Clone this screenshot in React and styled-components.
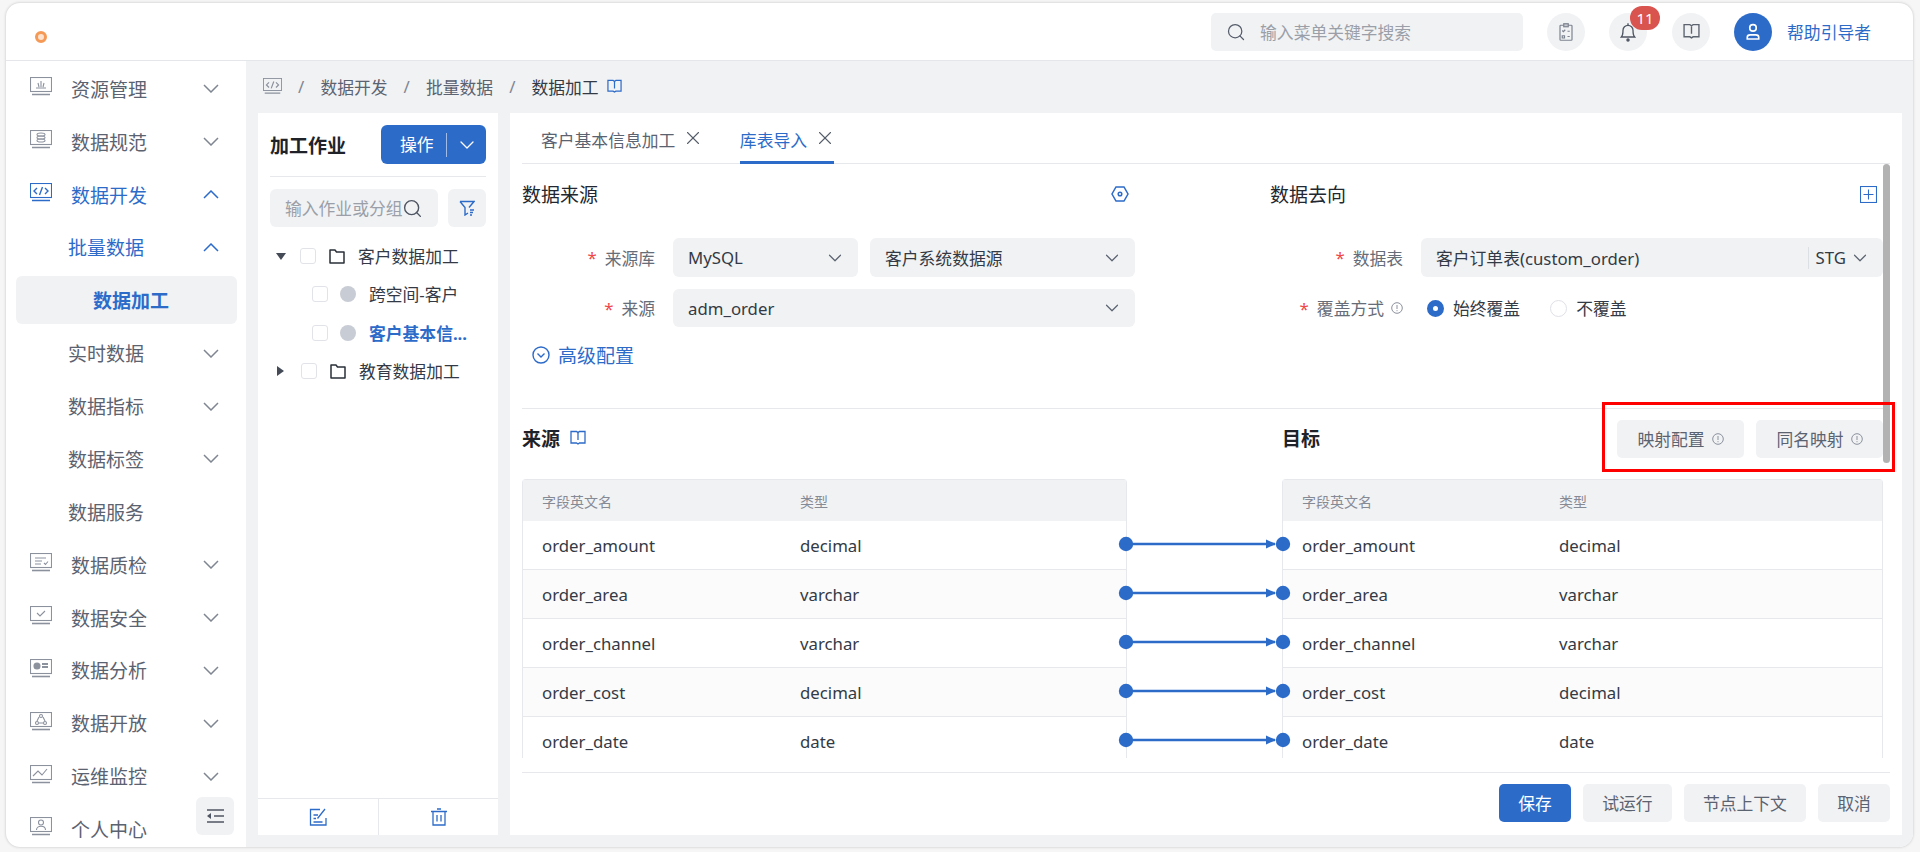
import React from 'react';
import styled, { createGlobalStyle } from 'styled-components';
import { Search, X, ChevronDown } from 'lucide-react';

const BLUE = '#2d6bc9';

const Global = createGlobalStyle`
  html, body { margin: 0; padding: 0; background: #f6f6f6; }
  body { font-family: "Noto Sans", "Noto Sans CJK SC", "Liberation Sans", sans-serif; }
  * { box-sizing: border-box; }
`;

const Page = styled.div`
  width: 1920px;
  height: 852px;
  padding: 3px 7px 5px 6px;
  overflow: hidden;
`;

const Frame = styled.div`
  height: 844px;
  background: #fff;
  border-radius: 14px;
  box-shadow: 0 0 3px rgba(0, 0, 0, 0.22);
  overflow: hidden;
  display: flex;
  flex-direction: column;
`;

/* top bar */
const Header = styled.header`
  height: 58px;
  flex: none;
  border-bottom: 1px solid #e4e6ea;
  display: flex;
  align-items: center;
  padding: 0 42px 0 29px;
`;

const Logo = styled.div`
  width: 12px;
  height: 12px;
  margin-top: 10px;
  border-radius: 50%;
  border: 3px solid #f59a56;
  background: #fde3cf;
`;

const HeaderRight = styled.div`
  margin-left: auto;
  display: flex;
  align-items: center;
`;

const TopSearch = styled.div`
  width: 312px;
  height: 38px;
  background: #f1f2f4;
  border-radius: 5px;
  display: flex;
  align-items: center;
  gap: 14px;
  padding-left: 15px;
  margin-right: 24px;
  color: #9a9fa8;
  font-size: 16.8px;
  svg { color: #565d6a; }
`;

const RoundIcon = styled.div`
  position: relative;
  width: 38px;
  height: 38px;
  border-radius: 50%;
  background: ${(p) => (p.$primary ? BLUE : '#f1f2f4')};
  color: ${(p) => (p.$primary ? '#fff' : '#5d6470')};
  margin-right: ${(p) => p.$gap || 24}px;
  display: flex;
  align-items: center;
  justify-content: center;
`;

const Badge = styled.span`
  position: absolute;
  top: -7px;
  right: -13px;
  width: 30px;
  height: 24px;
  border-radius: 12px;
  background: #d9534f;
  color: #fff;
  font-size: 15px;
  line-height: 24px;
  text-align: center;
`;

const HelpLink = styled.span`
  color: ${BLUE};
  font-size: 16.8px;
`;

const Body = styled.div`
  flex: 1;
  min-height: 0;
  display: flex;
`;

/* left menu */
const Sidebar = styled.nav`
  position: relative;
  width: 240px;
  flex: none;
  overflow: hidden;
  padding-top: 1.5px;
`;

const MenuRow = styled.div`
  height: 52.85px;
  display: flex;
  align-items: center;
  padding: 0 27px 0 ${(p) => (p.$sub ? 62 : 24)}px;
  font-size: 19px;
  color: ${(p) => (p.$on ? BLUE : '#5b6270')};
`;

const MenuIcon = styled.span`
  width: 41px;
  flex: none;
  display: flex;
  margin-top: -4px;
`;

const MenuChevron = styled.svg`
  margin-left: auto;
  width: 16px;
  height: 9px;
  fill: none;
  stroke: ${(p) => (p.$on ? BLUE : '#7f8692')};
  stroke-width: 1.5;
`;

const ActiveRow = styled.div`
  height: 48px;
  margin: 2.5px 9px 2.5px 10px;
  padding-left: 77px;
  display: flex;
  align-items: center;
  background: #f1f2f4;
  border-radius: 6px;
  font-size: 19px;
  font-weight: 700;
  color: ${BLUE};
`;

const CollapseButton = styled.button`
  position: absolute;
  left: 190px;
  bottom: 12px;
  width: 38px;
  height: 38px;
  border: 0;
  border-radius: 6px;
  background: #f1f2f4;
  color: #4f5663;
  display: flex;
  align-items: center;
  justify-content: center;
  padding: 0;
`;

/* work area */
const Work = styled.main`
  flex: 1;
  min-width: 0;
  background: #f1f2f4;
  padding: 0 11px 12px 12px;
  display: flex;
  flex-direction: column;
`;

const Crumbs = styled.div`
  height: 52px;
  flex: none;
  display: flex;
  align-items: center;
  padding-left: 5px;
  padding-bottom: 1px;
  font-size: 16.8px;
  color: #5b6270;
`;

const CrumbSep = styled.span`
  width: 38.4px;
  text-align: center;
  color: #7f8692;
`;

const CrumbNow = styled.span`
  color: #333a45;
  margin-right: 8px;
`;

const Panels = styled.div`
  flex: 1;
  min-height: 0;
  display: flex;
  gap: 12px;
`;

const JobPanel = styled.section`
  width: 240px;
  flex: none;
  background: #fff;
  display: flex;
  flex-direction: column;
`;

const JobHead = styled.div`
  margin: 12px 12px 0;
  padding-bottom: 12px;
  border-bottom: 1px solid #e6e8eb;
  display: flex;
  align-items: center;
  justify-content: space-between;
`;

const StrongTitle = styled.h3`
  margin: 0;
  font-size: 19px;
  font-weight: 700;
  color: #1f2329;
`;

const SplitButton = styled.button`
  width: 105px;
  height: 39px;
  border: 0;
  border-radius: 6px;
  background: ${BLUE};
  color: #fff;
  font: inherit;
  font-size: 16.8px;
  display: flex;
  align-items: center;
  padding: 0 0 0 19px;
  span { padding-right: 12px; line-height: 24px; border-right: 1px solid rgba(255,255,255,.55); }
  svg { margin-left: 8px; }
`;

const JobTools = styled.div`
  display: flex;
  gap: 10px;
  padding: 12px 12px 10px;
`;

const JobSearch = styled.div`
  width: 168px;
  height: 38px;
  border-radius: 6px;
  background: #f1f2f4;
  color: #9a9fa8;
  font-size: 16.8px;
  white-space: nowrap;
  display: flex;
  align-items: center;
  padding-left: 15px;
  svg { color: #4f5663; flex: none; }
`;

const FilterButton = styled.div`
  width: 38px;
  height: 38px;
  border-radius: 6px;
  background: #f1f2f4;
  color: ${BLUE};
  display: flex;
  align-items: center;
  justify-content: center;
`;

const Tree = styled.div`
  flex: 1;
`;

const TreeRow = styled.div`
  height: 38.3px;
  display: flex;
  align-items: center;
  padding-left: ${(p) => (p.$child ? 54 : 18)}px;
  font-size: 16.8px;
  color: ${(p) => (p.$on ? BLUE : '#333a45')};
  font-weight: ${(p) => (p.$on ? 700 : 400)};
`;

const Caret = styled.span`
  width: 0;
  height: 0;
  margin-right: ${(p) => (p.$open ? 14 : 17)}px;
  ${(p) => p.$open
    ? 'border-left: 5px solid transparent; border-right: 5px solid transparent; border-top: 7px solid #444b57; margin-left: 0;'
    : 'border-top: 5px solid transparent; border-bottom: 5px solid transparent; border-left: 7px solid #444b57; margin-left: 1px;'}
`;

const Check = styled.span`
  width: 16px;
  height: 16px;
  flex: none;
  border: 1.5px solid #e1e3e8;
  border-radius: 3px;
  background: #fff;
  margin-right: ${(p) => (p.$child ? 12 : 13)}px;
`;

const NodeDot = styled.span`
  width: 16px;
  height: 16px;
  flex: none;
  border-radius: 50%;
  background: #c8ccd4;
  margin-right: 13px;
`;

const FolderWrap = styled.span`
  display: flex;
  margin-right: 13px;
  color: #2a2f38;
`;

const JobFoot = styled.div`
  height: 37px;
  flex: none;
  border-top: 1px solid #e6e8eb;
  display: grid;
  grid-template-columns: 121px 1fr;
  color: ${BLUE};
`;

const FootCell = styled.div`
  display: flex;
  align-items: center;
  justify-content: center;
  border-right: ${(p) => (p.$line ? '1px solid #e6e8eb' : '0')};
`;

const EditorPanel = styled.section`
  flex: 1;
  min-width: 0;
  background: #fff;
  padding: 0 12px;
  display: flex;
  flex-direction: column;
`;

const Tabs = styled.div`
  height: 51px;
  flex: none;
  display: flex;
  gap: 37.6px;
  padding-left: 19px;
  border-bottom: 1px solid #e6e8eb;
`;

const Tab = styled.div`
  height: 51px;
  padding: 5px 3px 0 0;
  display: flex;
  align-items: center;
  gap: 12px;
  font-size: 16.8px;
  color: ${(p) => (p.$on ? BLUE : '#5b6270')};
  border-bottom: 3px solid ${(p) => (p.$on ? BLUE : 'transparent')};
  svg { color: #565d6a; margin: -3px -5px 0; }
`;

const ScrollArea = styled.div`
  position: relative;
  height: 594px;
  flex: none;
  padding-right: 7px;
`;

const ScrollThumb = styled.div`
  position: absolute;
  top: 0;
  right: 0;
  width: 7px;
  height: 299px;
  border-radius: 4px;
  background: #b2b2b2;
`;

const ConfigGrid = styled.div`
  height: 245px;
  border-bottom: 1px solid #e6e8eb;
  margin-right: -7px;
  padding-right: 7px;
  display: grid;
  grid-template-columns: 613px 613px;
  column-gap: 135px;
`;

const ConfigHead = styled.div`
  height: 34px;
  margin: 13px 0 27px;
  padding-right: 6px;
  display: flex;
  align-items: center;
  justify-content: space-between;
  color: ${BLUE};
`;

const PlainTitle = styled.h3`
  margin: 0;
  font-size: 19px;
  font-weight: 400;
  color: #222730;
`;

const FormRow = styled.div`
  display: grid;
  grid-template-columns: 133px 1fr;
  column-gap: 18px;
  align-items: center;
  margin-bottom: 12px;
  min-height: 38px;
`;

const FormLabel = styled.label`
  display: flex;
  justify-content: flex-end;
  align-items: center;
  font-size: 16.8px;
  color: #666c78;
  white-space: nowrap;
  i { color: #f0484a; font-style: normal; margin-right: 8px; }
  svg { margin-left: 7px; }
`;

const FieldGroup = styled.div`
  display: flex;
  gap: 12px;
`;

const SelectBox = styled.div`
  flex: ${(p) => (p.$w ? `0 0 ${p.$w}px` : 1)};
  height: ${(p) => p.$h || 38}px;
  border-radius: 6px;
  background: #f1f2f4;
  padding: 0 15px;
  font-size: 16.8px;
  color: #333a45;
  display: flex;
  align-items: center;
  justify-content: space-between;
  svg { color: #5b6270; margin-right: -3px; }
`;

const SchemaPick = styled.span`
  display: flex;
  align-items: center;
  gap: 3px;
  padding-left: 7px;
  line-height: 22px;
  border-left: 1px solid #dcdfe4;
`;

const RadioGroup = styled.div`
  display: flex;
  align-items: center;
  padding-left: 6px;
  font-size: 16.8px;
  color: #333a45;
`;

const Radio = styled.span`
  width: 17px;
  height: 17px;
  border-radius: 50%;
  margin-right: 9px;
  background: #fff;
  border: ${(p) => (p.$on ? `6px solid ${BLUE}` : '1.5px solid #dfe1e6')};
`;

const RadioText = styled.span`
  margin-right: 30px;
`;

const AdvancedLink = styled.div`
  display: flex;
  align-items: center;
  gap: 8px;
  padding-left: 10px;
  margin-top: 14px;
  font-size: 19px;
  color: ${BLUE};
`;

const MapGrid = styled.div`
  display: grid;
  grid-template-columns: 605px 155px 601px;
`;

const MapHead = styled.div`
  grid-column: ${(p) => p.$col};
  height: 70px;
  display: flex;
  align-items: center;
  padding-bottom: 10px;
  justify-content: ${(p) => (p.$spread ? 'space-between' : 'flex-start')};
  color: ${BLUE};
`;

const MapLabel = styled.div`
  display: flex;
  align-items: center;
  gap: 10px;
  margin-bottom: 2px;
`;

const ButtonPair = styled.div`
  position: relative;
  display: flex;
  gap: 12px;
`;

const Highlight = styled.div`
  position: absolute;
  inset: -18px -12px -14px -15px;
  border: 3px solid #f00;
  pointer-events: none;
`;

const HintButton = styled.div`
  width: 127px;
  height: 38px;
  border-radius: 5px;
  background: #f1f2f4;
  color: #5b6270;
  font-size: 16.8px;
  display: flex;
  align-items: center;
  justify-content: center;
  gap: 7px;
`;

const TableClip = styled.div`
  grid-column: 1 / -1;
  height: 279px;
  overflow: hidden;
  display: grid;
  grid-template-columns: 605px 155px 601px;
`;

const FieldTable = styled.div`
  border: 1px solid #e6e8eb;
  border-bottom: 0;
  border-radius: 4px 4px 0 0;
`;

const FieldHead = styled.div`
  height: 41px;
  background: #f1f2f4;
  display: grid;
  grid-template-columns: ${(p) => p.$col}px 1fr;
  align-items: center;
  padding-left: 19px;
  font-size: 14px;
  color: #858a94;
`;

const FieldRow = styled.div`
  height: 49px;
  display: grid;
  grid-template-columns: ${(p) => p.$col}px 1fr;
  align-items: center;
  padding-left: 19px;
  font-size: 16.8px;
  color: #333a45;
  background: ${(p) => (p.$even ? '#fbfbfb' : '#fff')};
  border-bottom: 1px solid #e6e8eb;
`;

const Links = styled.div`
  position: relative;
  z-index: 1;
  padding-top: 41px;
`;

const LinkSvg = styled.svg`
  display: block;
  overflow: visible;
  width: 155px;
  height: 49px;
`;

const Footer = styled.footer`
  flex: none;
  margin-top: 14px;
  padding-top: 11px;
  border-top: 1px solid #e6e8eb;
  display: flex;
  justify-content: flex-end;
  gap: 12px;
`;

const ActionButton = styled.button`
  height: 38px;
  padding: 0 19.2px;
  border: 0;
  border-radius: 5px;
  font: inherit;
  font-size: 16.8px;
  background: ${(p) => (p.$primary ? BLUE : '#f1f2f4')};
  color: ${(p) => (p.$primary ? '#fff' : '#5b6270')};
`;

/* drawings */
const MonitorIcon = ({ on, width = 22, children }) => {
  const c = on ? BLUE : '#8b919d';
  return (
    <svg width={width} height={(width * 19) / 22} viewBox="0 0 22 19" fill="none" stroke={c} strokeWidth="1.1">
      <rect x="0.5" y="0.5" width="21" height="14" />
      <path d="M2 17.5h18" strokeWidth="1.6" />
      {children}
    </svg>
  );
};

const glyphs = {
  resource: <path d="M6 11h10M11 4v6M8 6l1 4M14 6l-1 4" />,
  spec: <g><ellipse cx="11" cy="4.5" rx="4" ry="1.5" /><ellipse cx="11" cy="7.5" rx="4" ry="1.5" /><ellipse cx="11" cy="10.5" rx="4" ry="1.5" /></g>,
  dev: <path d="M7 5l-3 3 3 3M15 5l3 3-3 3M12.5 4l-3 8" strokeWidth="1.4" />,
  quality: <path d="M5 5h11M5 8h7M5 11h6M14 10l1.5 1.5 2.5-3" />,
  safe: <path d="M7 7l3 3 5-5" />,
  analysis: <g><circle cx="7" cy="7" r="3" fill="#8b919d" /><path d="M12 5h6M12 8h6" strokeWidth="2" /></g>,
  open: <g><circle cx="11" cy="4" r="1.5" /><circle cx="7" cy="11" r="1.5" /><circle cx="15" cy="11" r="1.5" /><path d="M9 5l-2 4M13 5l2 4M9 11h4" /></g>,
  ops: <path d="M3 11l5-5 4 4 5-6" />,
  user: <g><circle cx="11" cy="5.5" r="2.5" /><path d="M6.5 13c0-5 9-5 9 0" /></g>,
};

const Chev = ({ on }) => (
  <MenuChevron $on={on} viewBox="0 0 16 9">
    <path d={on ? 'M1 8l7-7 7 7' : 'M1 1l7 7 7-7'} />
  </MenuChevron>
);

const BookIcon = ({ size = 16, color = 'currentColor' }) => (
  <svg width={size} height={size} viewBox="0 0 16 16" fill="none" stroke={color} strokeWidth="1.3">
    <path d="M1 1.5h5.5L8 2.6l1.5-1.1H15v11.500H9.500L8 14l-1.500-1H1z" />
    <path d="M8 3v7" />
  </svg>
);

const InfoIcon = () => (
  <svg width="12" height="12" viewBox="0 0 12 12" fill="none" stroke="#8b919d" strokeWidth="1">
    <circle cx="6" cy="6" r="5.3" />
    <path d="M6 3v4M6 8.2v1" />
  </svg>
);

const ClipboardIcon = () => (
  <svg width="16" height="18" viewBox="0 0 18 24" fill="none" stroke="#7d838f" strokeWidth="1.6">
    <rect x="1" y="3" width="16" height="20" rx="1" />
    <rect x="6" y="1" width="6" height="4" fill="#c6c9cf" />
    <path d="M4 10l1.500 1.500L8 9M11 11h3M4 17h3v3H4zM11 18h3" />
  </svg>
);

const BellIcon = () => (
  <svg width="16" height="20" viewBox="0 0 18 24" fill="none" stroke="#4f5663" strokeWidth="1.600">
    <path d="M1 18c2-2 2-4 2-8a6 6 0 0 1 12 0c0 4 0 6 2 8z" />
    <path d="M9 1.500V4" />
    <circle cx="9" cy="21.500" r="1.300" fill="#4f5663" />
  </svg>
);

const UserIcon = () => (
  <svg width="16" height="18" viewBox="0 0 18 22" fill="none" stroke="#fff" strokeWidth="2">
    <circle cx="9" cy="6" r="4" />
    <path d="M2 19.500v-2c0-2 1.500-3 3.500-3h7c2 0 3.500 1 3.500 3v2z" />
  </svg>
);

const FolderIcon = () => (
  <svg width="16" height="15" viewBox="0 0 16 15" fill="none" stroke="currentColor" strokeWidth="1.5">
    <path d="M1 1h5l1.500 2H15v11H1z" strokeLinejoin="round" />
  </svg>
);

const FunnelIcon = () => (
  <svg width="16" height="16" viewBox="0 0 16 16" fill="none" stroke="currentColor" strokeWidth="1.4">
    <path d="M1 1.500h14l-5 6M1 1.500l5 6V15l3-2M11 10h4M11 12.500h3M11 15h2" />
  </svg>
);

const EditIcon = () => (
  <svg width="18" height="18" viewBox="0 0 18 18" fill="none" stroke="currentColor" strokeWidth="1.3">
    <path d="M11 1.500H1.500v15.500H17v-7M4.500 7H9M4.500 10.500H7M4.500 14h9M8.500 10.500L16 1" />
  </svg>
);

const TrashIcon = () => (
  <svg width="18" height="18" viewBox="0 0 18 18" fill="none" stroke="currentColor" strokeWidth="1.3">
    <path d="M1 3.500h16M7 1h4M3 3.500V17h12V3.500M7 7v6.500M11 7v6.500" />
  </svg>
);

const OutdentIcon = () => (
  <svg width="17" height="14" viewBox="0 0 17 14" fill="none" stroke="currentColor" strokeWidth="1.6">
    <path d="M0 1h17M7 7h10M0 13h17" />
    <path d="M0 7l4-3v6z" fill="currentColor" stroke="none" />
  </svg>
);

const HexIcon = () => (
  <svg width="18" height="18" viewBox="0 0 18 18" fill="none" stroke={BLUE} strokeWidth="1.5">
    <path d="M5 2h8l4 7-4 7H5L1 9z" />
    <circle cx="9" cy="9" r="1.800" />
  </svg>
);

const PlusBox = () => (
  <svg width="17" height="17" viewBox="0 0 17 17" fill="none" stroke={BLUE} strokeWidth="1.1">
    <rect x="0.5" y="0.5" width="16" height="16" />
    <path d="M8.500 3.500v10M3.500 8.500h10" />
  </svg>
);

const CircleDown = () => (
  <svg width="18" height="18" viewBox="0 0 18 18" fill="none" stroke={BLUE} strokeWidth="1.4">
    <circle cx="9" cy="9" r="8" />
    <path d="M5.500 7.500L9 11l3.500-3.500" />
  </svg>
);

const LinkLine = () => (
  <LinkSvg viewBox="0 0 155 49">
    <line x1="-1" y1="24" x2="148" y2="24" stroke={BLUE} strokeWidth="2.400" />
    <path d="M139 19.500l10 4.500-10 4.500z" fill={BLUE} />
    <circle cx="-1" cy="24" r="7.200" fill={BLUE} />
    <circle cx="156" cy="24" r="7.200" fill={BLUE} />
  </LinkSvg>
);

const fields = [
  ['order_amount', 'decimal'],
  ['order_area', 'varchar'],
  ['order_channel', 'varchar'],
  ['order_cost', 'decimal'],
  ['order_date', 'date'],
];

const Table = ({ col }) => (
  <FieldTable>
    <FieldHead $col={col}><span>字段英文名</span><span>类型</span></FieldHead>
    {fields.map(([name, type], i) => (
      <FieldRow key={name} $col={col} $even={i % 2 === 1}><span>{name}</span><span>{type}</span></FieldRow>
    ))}
  </FieldTable>
);

export default function App() {
  return (
    <Page>
      <Global />
      <Frame>
        <Header>
          <Logo />
          <HeaderRight>
            <TopSearch><Search size={20} strokeWidth={1.5} />输入菜单关键字搜索</TopSearch>
            <RoundIcon><ClipboardIcon /></RoundIcon>
            <RoundIcon $gap={25}><BellIcon /><Badge>11</Badge></RoundIcon>
            <RoundIcon><BookIcon size={17} /></RoundIcon>
            <RoundIcon $primary $gap={15}><UserIcon /></RoundIcon>
            <HelpLink>帮助引导者</HelpLink>
          </HeaderRight>
        </Header>
        <Body>
          <Sidebar>
            <MenuRow><MenuIcon><MonitorIcon>{glyphs.resource}</MonitorIcon></MenuIcon>资源管理<Chev /></MenuRow>
            <MenuRow><MenuIcon><MonitorIcon>{glyphs.spec}</MonitorIcon></MenuIcon>数据规范<Chev /></MenuRow>
            <MenuRow $on><MenuIcon><MonitorIcon on>{glyphs.dev}</MonitorIcon></MenuIcon>数据开发<Chev on /></MenuRow>
            <MenuRow $sub $on>批量数据<Chev on /></MenuRow>
            <ActiveRow>数据加工</ActiveRow>
            <MenuRow $sub>实时数据<Chev /></MenuRow>
            <MenuRow $sub>数据指标<Chev /></MenuRow>
            <MenuRow $sub>数据标签<Chev /></MenuRow>
            <MenuRow $sub>数据服务</MenuRow>
            <MenuRow><MenuIcon><MonitorIcon>{glyphs.quality}</MonitorIcon></MenuIcon>数据质检<Chev /></MenuRow>
            <MenuRow><MenuIcon><MonitorIcon>{glyphs.safe}</MonitorIcon></MenuIcon>数据安全<Chev /></MenuRow>
            <MenuRow><MenuIcon><MonitorIcon>{glyphs.analysis}</MonitorIcon></MenuIcon>数据分析<Chev /></MenuRow>
            <MenuRow><MenuIcon><MonitorIcon>{glyphs.open}</MonitorIcon></MenuIcon>数据开放<Chev /></MenuRow>
            <MenuRow><MenuIcon><MonitorIcon>{glyphs.ops}</MonitorIcon></MenuIcon>运维监控<Chev /></MenuRow>
            <MenuRow><MenuIcon><MonitorIcon>{glyphs.user}</MonitorIcon></MenuIcon>个人中心</MenuRow>
            <CollapseButton><OutdentIcon /></CollapseButton>
          </Sidebar>
          <Work>
            <Crumbs>
              <MonitorIcon width={19}>{glyphs.dev}</MonitorIcon>
              <CrumbSep>/</CrumbSep>数据开发
              <CrumbSep>/</CrumbSep>批量数据
              <CrumbSep>/</CrumbSep><CrumbNow>数据加工</CrumbNow>
              <BookIcon size={15} color={BLUE} />
            </Crumbs>
            <Panels>
              <JobPanel>
                <JobHead>
                  <StrongTitle>加工作业</StrongTitle>
                  <SplitButton><span>操作</span><ChevronDown size={24} strokeWidth={1.3} /></SplitButton>
                </JobHead>
                <JobTools>
                  <JobSearch>输入作业或分组<Search size={21} strokeWidth={1.6} /></JobSearch>
                  <FilterButton><FunnelIcon /></FilterButton>
                </JobTools>
                <Tree>
                  <TreeRow><Caret $open /><Check /><FolderWrap><FolderIcon /></FolderWrap>客户数据加工</TreeRow>
                  <TreeRow $child><Check $child /><NodeDot />跨空间-客户</TreeRow>
                  <TreeRow $child $on><Check $child /><NodeDot />客户基本信...</TreeRow>
                  <TreeRow><Caret /><Check /><FolderWrap><FolderIcon /></FolderWrap>教育数据加工</TreeRow>
                </Tree>
                <JobFoot>
                  <FootCell $line><EditIcon /></FootCell>
                  <FootCell><TrashIcon /></FootCell>
                </JobFoot>
              </JobPanel>
              <EditorPanel>
                <Tabs>
                  <Tab>客户基本信息加工<X size={22} strokeWidth={1.2} /></Tab>
                  <Tab $on>库表导入<X size={22} strokeWidth={1.2} /></Tab>
                </Tabs>
                <ScrollArea>
                  <ScrollThumb />
                  <ConfigGrid>
                    <div>
                      <ConfigHead><PlainTitle>数据来源</PlainTitle><HexIcon /></ConfigHead>
                      <FormRow>
                        <FormLabel><i>*</i>来源库</FormLabel>
                        <FieldGroup>
                          <SelectBox $w={185} $h={39}>MySQL<ChevronDown size={22} strokeWidth={1.3} /></SelectBox>
                          <SelectBox $h={39}>客户系统数据源<ChevronDown size={22} strokeWidth={1.3} /></SelectBox>
                        </FieldGroup>
                      </FormRow>
                      <FormRow>
                        <FormLabel><i>*</i>来源</FormLabel>
                        <SelectBox>adm_order<ChevronDown size={22} strokeWidth={1.3} /></SelectBox>
                      </FormRow>
                      <AdvancedLink><CircleDown />高级配置</AdvancedLink>
                    </div>
                    <div>
                      <ConfigHead><PlainTitle>数据去向</PlainTitle><PlusBox /></ConfigHead>
                      <FormRow>
                        <FormLabel><i>*</i>数据表</FormLabel>
                        <SelectBox $h={39}>客户订单表(custom_order)<SchemaPick>STG<ChevronDown size={22} strokeWidth={1.3} /></SchemaPick></SelectBox>
                      </FormRow>
                      <FormRow>
                        <FormLabel><i>*</i>覆盖方式<InfoIcon /></FormLabel>
                        <RadioGroup>
                          <Radio $on /><RadioText>始终覆盖</RadioText>
                          <Radio /><RadioText>不覆盖</RadioText>
                        </RadioGroup>
                      </FormRow>
                    </div>
                  </ConfigGrid>
                  <MapGrid>
                    <MapHead $col={1}><MapLabel><StrongTitle>来源</StrongTitle><BookIcon size={16} /></MapLabel></MapHead>
                    <MapHead $col={3} $spread>
                      <MapLabel><StrongTitle>目标</StrongTitle></MapLabel>
                      <ButtonPair>
                        <HintButton>映射配置<InfoIcon /></HintButton>
                        <HintButton>同名映射<InfoIcon /></HintButton>
                        <Highlight />
                      </ButtonPair>
                    </MapHead>
                    <TableClip>
                      <Table col={258} />
                      <Links>{fields.map(([name]) => <LinkLine key={name} />)}</Links>
                      <Table col={257} />
                    </TableClip>
                  </MapGrid>
                </ScrollArea>
                <Footer>
                  <ActionButton $primary>保存</ActionButton>
                  <ActionButton>试运行</ActionButton>
                  <ActionButton>节点上下文</ActionButton>
                  <ActionButton>取消</ActionButton>
                </Footer>
              </EditorPanel>
            </Panels>
          </Work>
        </Body>
      </Frame>
    </Page>
  );
}
